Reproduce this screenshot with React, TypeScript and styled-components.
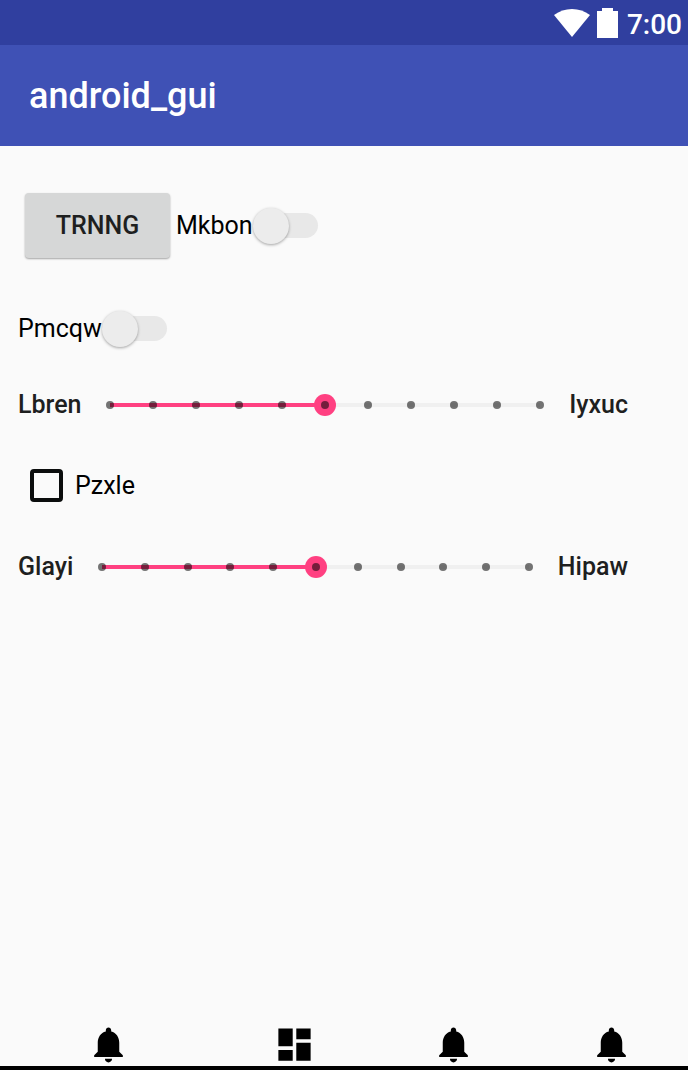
import React, { useState } from "react";
import styled, { createGlobalStyle } from "styled-components";

const GlobalStyle = createGlobalStyle`
  * { box-sizing: border-box; }
  body {
    margin: 0;
    background: #fafafa;
    color: #000;
    font-family: Roboto, "Liberation Sans", sans-serif;
    font-size: 25px;
    line-height: 30px;
  }
`;

const Screen = styled.div`
  display: flex;
  flex-direction: column;
  min-height: 100vh;
`;

const StatusBar = styled.div`
  display: flex;
  align-items: center;
  justify-content: flex-end;
  height: 45px;
  padding: 4px 6px 0 0;
  background: #303f9f;
  color: #fff;
  font-size: 28px;
  font-weight: 500;
`;

const StatusIcon = styled.svg`
  display: block;
  flex: none;
  margin-bottom: 4px;
  margin-right: ${(p: { $gap: number }) => p.$gap}px;
  fill: #fff;
`;

const AppBar = styled.header`
  display: flex;
  align-items: center;
  height: 101px;
  padding-left: 29px;
  background: #3f51b5;
  color: #fff;
`;

const Title = styled.h1`
  margin: 0;
  font-size: 36px;
  font-weight: 500;
  line-height: 42px;
`;

const Content = styled.main`
  flex: 1;
  padding: 12px 60px 0 18px;
`;

const Row = styled.div<{ $height?: number }>`
  display: flex;
  align-items: center;
  min-height: ${(p) => p.$height ?? 81}px;
`;

const RaisedButton = styled.button`
  width: 145px;
  height: 65px;
  margin: 0 6px 0 7px;
  padding: 0;
  border: 0;
  border-radius: 4px;
  background: #d6d7d7;
  box-shadow: 0 1px 2px rgba(0, 0, 0, 0.35);
  color: #1e1f1f;
  font: inherit;
  font-weight: 500;
`;

const ControlLabel = styled.label`
  display: flex;
  align-items: center;
`;

const SwitchInput = styled.input`
  appearance: none;
  position: relative;
  width: 65px;
  height: 36px;
  margin: 0;

  &::before {
    content: "";
    position: absolute;
    inset: 5px 0 6px 4px;
    border-radius: 13px;
    background: #e8e8e8;
  }

  &::after {
    content: "";
    position: absolute;
    top: 0;
    left: 0;
    width: 36px;
    height: 36px;
    border-radius: 50%;
    background: #ececec;
    box-shadow: 0 1px 3px rgba(0, 0, 0, 0.35);
  }

  &:checked::before { background: #ff9fc0; }
  &:checked::after { left: 29px; background: #ff4081; }
`;

const TickBox = styled.input`
  appearance: none;
  width: 33px;
  height: 33px;
  margin: 0 12px;
  border: 4px solid #0b0d0d;
  border-radius: 4px;

  &:checked { background: #ff4081; }
`;

const EndLabel = styled.span`
  font-weight: 500;
  color: #1e1f1f;
`;

const SliderBox = styled.div`
  position: relative;
  flex: 1;
  height: 22px;
  margin: 0 18px;
`;

const Track = styled.div`
  position: absolute;
  inset: 9px 11px;
  background: #f0f0f0;
`;

const Fill = styled.div`
  height: 100%;
  background: #ff4081;
`;

const Range = styled.input`
  appearance: none;
  position: absolute;
  inset: 0;
  width: 100%;
  height: 22px;
  margin: 0;
  background: transparent;

  &::-webkit-slider-thumb {
    appearance: none;
    width: 22px;
    height: 22px;
    border-radius: 50%;
    background: #ff4081;
  }
`;

const Ticks = styled.div`
  position: absolute;
  inset: 7px;
  display: flex;
  justify-content: space-between;
  pointer-events: none;
`;

const Tick = styled.i`
  width: 8px;
  height: 8px;
  border-radius: 50%;
  background: rgba(0, 0, 0, 0.54);
`;

const BottomNav = styled.nav`
  display: flex;
  justify-content: space-between;
  padding: 0 55px 0 87px;
  border-bottom: 4px solid #000;
`;

const NavButton = styled.button`
  padding: 0;
  border: 0;
  background: none;
  color: #000;

  &:first-child { margin-right: 28px; }
`;

const NavIcon = styled.svg`
  display: block;
  width: 43px;
  height: 43px;
  fill: currentColor;
`;

const icons = {
  bell: "M12 22c1.1 0 2-.9 2-2h-4c0 1.1.89 2 2 2zm6-6v-5c0-3.07-1.64-5.64-4.5-6.32V4c0-.83-.67-1.5-1.5-1.5s-1.5.67-1.5 1.5v.68C7.63 5.36 6 7.92 6 11v5l-2 2v1h16v-1l-2-2z",
  dashboard: "M3 13h8V3H3v10zm0 8h8v-6H3v6zm10 0h8V11h-8v10zm0-18v6h8V3h-8z",
};

const navItems: { name: string; icon: keyof typeof icons }[] = [
  { name: "Notifications", icon: "bell" },
  { name: "Dashboard", icon: "dashboard" },
  { name: "Alerts", icon: "bell" },
  { name: "Reminders", icon: "bell" },
];

const STEPS = 10;

function Switch({ label }: { label: string }) {
  return (
    <ControlLabel>
      {label}
      <SwitchInput type="checkbox" role="switch" />
    </ControlLabel>
  );
}

function Seek({ start, end }: { start: string; end: string }) {
  const [value, setValue] = useState(5);
  return (
    <Row>
      <EndLabel>{start}</EndLabel>
      <SliderBox>
        <Track>
          <Fill style={{ width: `${(value / STEPS) * 100}%` }} />
        </Track>
        <Range
          type="range"
          min={0}
          max={STEPS}
          value={value}
          aria-label={`${start} to ${end}`}
          onChange={(e) => setValue(Number(e.target.value))}
        />
        <Ticks>
          {Array.from({ length: STEPS + 1 }, (_, i) => (
            <Tick key={i} />
          ))}
        </Ticks>
      </SliderBox>
      <EndLabel>{end}</EndLabel>
    </Row>
  );
}

export default function App() {
  return (
    <Screen>
      <GlobalStyle />
      <StatusBar>
        <StatusIcon $gap={7} width="36" height="28" viewBox="0 0 36 28" aria-hidden>
          <path d="M18 28L0 6Q8 0 18 0T36 6z" />
        </StatusIcon>
        <StatusIcon $gap={9} width="21" height="30" viewBox="0 0 21 30" aria-hidden>
          <path d="M5 0h11v3h5v27H0V3h5z" />
        </StatusIcon>
        <span>7:00</span>
      </StatusBar>
      <AppBar>
        <Title>android_gui</Title>
      </AppBar>
      <Content>
        <Row $height={135}>
          <RaisedButton type="button">TRNNG</RaisedButton>
          <Switch label="Mkbon" />
        </Row>
        <Row $height={71}>
          <Switch label="Pmcqw" />
        </Row>
        <Seek start="Lbren" end="Iyxuc" />
        <Row>
          <ControlLabel>
            <TickBox type="checkbox" />
            Pzxle
          </ControlLabel>
        </Row>
        <Seek start="Glayi" end="Hipaw" />
      </Content>
      <BottomNav>
        {navItems.map(({ name, icon }) => (
          <NavButton key={name} type="button" aria-label={name}>
            <NavIcon viewBox="0 0 24 24" aria-hidden>
              <path d={icons[icon]} />
            </NavIcon>
          </NavButton>
        ))}
      </BottomNav>
    </Screen>
  );
}
